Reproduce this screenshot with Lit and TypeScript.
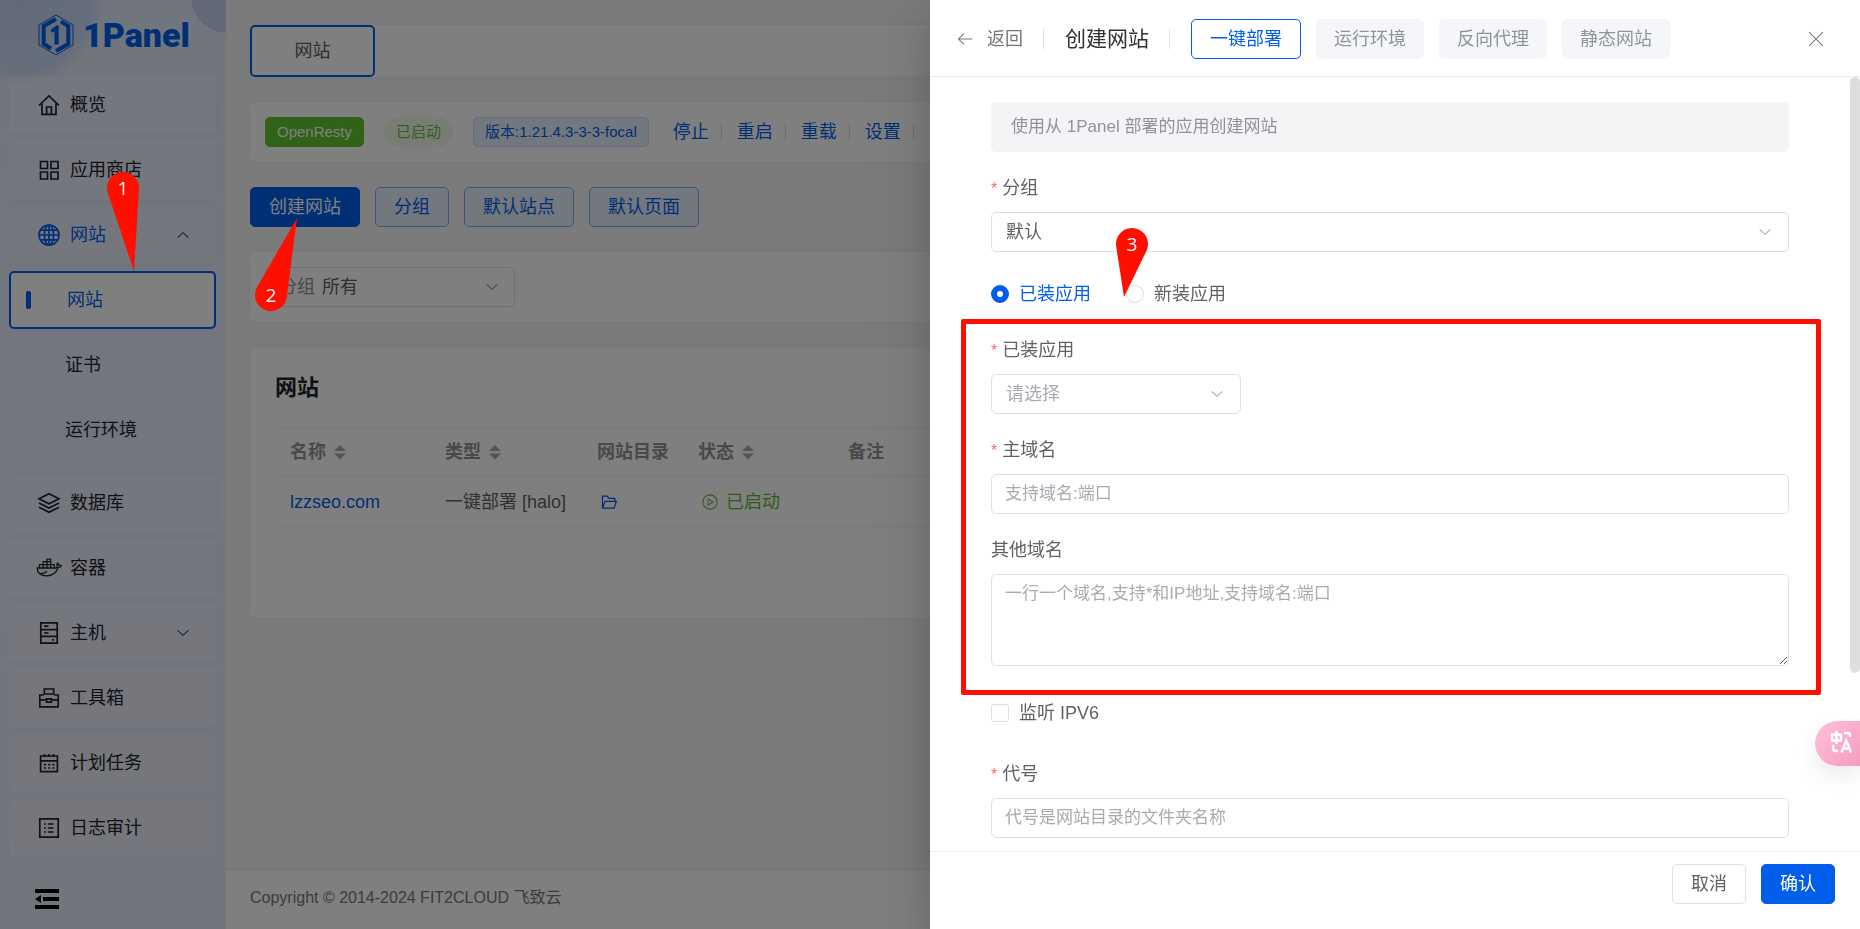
import { LitElement, html, svg, css, nothing } from "lit";
import { customElement, property } from "lit/decorators.js";
import { classMap } from "lit/directives/class-map.js";

const FONT = css`"Liberation Sans", "Noto Sans CJK SC", sans-serif`;

const icons: Record<string, unknown> = {
  home: svg`<path d="M1 11.5 11 2l10 9.5M4 9.5V20.3h14V9.5M8.6 20v-7h4.8v7"/>`,
  grid: svg`<path d="M2.5 2.5h7v7h-7zM13 2.5h7v7h-7zM2.5 13h7v7h-7zM13 13h7v7h-7z"/>`,
  globe: svg`<circle cx="11" cy="11" r="10"/><ellipse cx="11" cy="11" rx="4.6" ry="10"/><path d="M1 11h20M11 1v20M2.8 6.2h16.4M2.8 15.8h16.4"/>`,
  layers: svg`<path d="M11 1.8 1 6.8l10 5 10-5zM1 11l10 5 10-5M1 15.2l10 5 10-5"/>`,
  docker: svg`<path stroke-width="1.3" d="M-.8 11h18.6c1.3 0 1.7-1 1.3-2.4-.4-1-.3-1.8.4-2.6.9.8 1.2 1.5 1.3 2.3 1-.2 1.9 0 2.6.3-.5 1.3-1.5 2-3.3 2.2-1.8 5-5.4 8-11.4 8-5.8 0-9.5-2.8-9.5-7.8zM1.4 11V7.6h3.8V11M5.2 11V4.6H9V11M9 11V4.6h3.6V11M9 4.6V2.2h3.6v2.4M12.6 7.6h3.6V11M5.2 7.6h7.4M1.5 16.5c3 .3 5.500-.5 7.500-2.3"/>`,
  host: svg`<path d="M2.8 .8h16.4v20.400H2.8zM2.8 7.6h16.4M2.8 14.3h16.4M6 4.2h4.5M6 11h4.5M14 17.8h2"/>`,
  toolbox: svg`<path d="M6 8H1.8v11.8h18.400V8H16M6.3 7V2h9.400v5zM2 12.8h6.4M13.6 12.8H20M8.6 11.8h4.800v3.400H8.600z"/>`,
  calendar: svg`<path d="M2.6 4h16.8v15.600H2.600zM2.600 8.800h16.800M6.500 2v3M11 2v3M15.500 2v3"/><path stroke-dasharray="2.200 2" d="M5.900 12.700h11M5.900 16h11"/>`,
  log: svg`<path d="M1.8 1.8h18.4v18.4H1.8zM6 7h1.8M9.8 7H15.500M6 11h1.800M9.800 11H15.500M6 15h1.800M9.800 15H15.500"/>`,
  chevron: svg`<path d="m4.5 7.8 6.5 6 6.5-6"/>`,
  back: svg`<path d="M21 11H2M9.5 3.5 2 11l7.5 7.5"/>`,
  close: svg`<path d="m1.5 1.5 19 19M20.5 1.5l-19 19"/>`,
  folder: svg`<path d="M2 19.5V3h6.5l2.500 3h8v3.500M2 19.500 5.500 10H21l-3 9.500z"/>`,
  play: svg`<circle cx="11" cy="11" r="9.800"/><path d="M8.500 6.800v8.400L15 11z"/>`,
};

const icon = (name: string, cls = "") =>
  html`<svg class="icon ${cls}" viewBox="0 0 22 22" aria-hidden="true">${icons[name]}</svg>`;

const iconStyles = css`
  .icon {
    width: 22px;
    height: 22px;
    flex: none;
    fill: none;
    stroke: currentColor;
    stroke-width: 1.7;
    overflow: visible;
  }
  .icon.small {
    width: 16px;
    height: 16px;
  }
  .icon.chev {
    width: 18px;
    height: 18px;
    stroke-width: 1.3;
  }
  .icon.thin {
    stroke-width: 1.4;
  }
`;

/** Numbered teardrop whose point ends on the control it explains. */
@customElement("step-pin")
class StepPin extends LitElement {
  @property({ type: Number }) step = 1;
  @property({ type: Number }) dx = 0;
  @property({ type: Number }) dy = 50;

  static styles = css`
    :host {
      display: block;
      position: absolute;
      width: 0;
      height: 0;
      pointer-events: none;
    }
    svg {
      overflow: visible;
      display: block;
      width: 1px;
      height: 1px;
    }
    path {
      fill: #ff0f00;
    }
    text {
      fill: #fff;
      font: 19px "Open Sans", "Noto Sans", sans-serif;
      text-anchor: middle;
    }
  `;

  render() {
    const r = 16;
    const d = Math.hypot(this.dx, this.dy);
    const a = Math.atan2(this.dy, this.dx);
    const t = Math.acos(r / d);
    const p = (k: number) => `${r * Math.cos(k)} ${r * Math.sin(k)}`;
    return html`<svg>
      <path d="M${this.dx} ${this.dy}L${p(a + t)}A${r} ${r} 0 1 1 ${p(a - t)}Z" />
      <text x="0" y="7">${this.step}</text>
    </svg>`;
  }
}

@customElement("side-menu")
class SideMenu extends LitElement {
  static styles = [
    iconStyles,
    css`
      :host {
        display: flex;
        flex-direction: column;
        width: 226px;
        flex: none;
        font: 18px/28px ${FONT};
        color: #1f2329;
        background:
          radial-gradient(circle at 226px -2px, #c3d0ee 0 34px, transparent 35px),
          radial-gradient(circle at 20px 0, #c4d4f2 0, #ccdaf6 70px, transparent 86px),
          linear-gradient(#e2ebfa, #e7ecfc 50%, #e6eafa);
      }
      .logo {
        display: flex;
        align-items: center;
        gap: 9px;
        height: 70px;
        padding: 0 0 0 38px;
        margin-bottom: 6px;
        color: #005eeb;
        font: 900 34px/70px Roboto, sans-serif;
        text-decoration: none;
      }
      .logo svg {
        width: 36px;
        height: 42px;
      }
      nav {
        flex: 1;
        display: flex;
        flex-direction: column;
        gap: 7px;
        padding: 0 10px 0 9px;
      }
      .item {
        box-sizing: border-box;
        display: flex;
        align-items: center;
        height: 58px;
        padding: 0 20px 0 29px;
        gap: 10px;
        border-radius: 5px;
        background: rgba(255, 255, 255, 0.2);
        box-shadow: 0 0 6px rgba(80, 100, 160, 0.05);
        color: inherit;
        text-decoration: none;
      }
      .item.open {
        color: #005eeb;
      }
      .item .chev {
        margin-left: auto;
        color: #3f4552;
        margin-right: 4px;
      }
      .flip {
        transform: rotate(180deg);
      }
      .sub {
        padding-left: 56px;
        background: none;
        box-shadow: none;
      }
      .sub.last {
        margin-bottom: 8px;
      }
      .sub.active {
        padding-left: 15px;
        gap: 36px;
        background: #fff;
        border: 2px solid #005eeb;
        color: #005eeb;
      }
      .sub.active::before {
        content: "";
        width: 5px;
        height: 18px;
        border-radius: 2px;
        background: #005eeb;
      }
      .fold {
        display: flex;
        align-items: center;
        height: 61px;
        padding: 0 35px;
        border: 0;
        background: none;
      }
      .fold svg {
        width: 24px;
        height: 22px;
      }
    `,
  ];

  private item(name: string, label: string, chev = "") {
    return html`<a href="#" class=${classMap({ item: true, open: chev === "up" })}>
      ${icon(name)}<span>${label}</span>
      ${chev ? icon("chevron", chev === "up" ? "chev flip" : "chev") : nothing}
    </a>`;
  }

  render() {
    return html`
      <a class="logo" href="#">
        <svg viewBox="0 0 36 42" fill="none" stroke="#005eeb">
          <path stroke-width="1" d="M18 1 35 11v20L18 41 1 31V11z" />
          <path stroke-width="4" d="M23 7.5 30.3 12v18L18 37M13 34.5 5.7 30V12L18 5" />
          <path fill="#005eeb" stroke="none" d="M13 15.5 18.5 11.5H20.7V30.5H16.5V17.5L13 18.5z" />
        </svg>
        <span>1Panel</span>
      </a>
      <nav>
        ${this.item("home", "概览")} ${this.item("grid", "应用商店")} ${this.item("globe", "网站", "up")}
        <a href="#" class="item sub active">网站</a>
        <a href="#" class="item sub">证书</a>
        <a href="#" class="item sub last">运行环境</a>
        ${this.item("layers", "数据库")} ${this.item("docker", "容器")} ${this.item("host", "主机", "down")}
        ${this.item("toolbox", "工具箱")} ${this.item("calendar", "计划任务")} ${this.item("log", "日志审计")}
      </nav>
      <button class="fold" aria-label="收起菜单">
        <svg viewBox="0 0 24 22"><path d="M0 1h24v4H0zM8 9h16v4H8zM0 17h24v4H0zM6 7v8L0 11z" /></svg>
      </button>
    `;
  }
}

@customElement("site-list")
class SiteList extends LitElement {
  static styles = [
    iconStyles,
    css`
      :host {
        flex: 1;
        min-width: 0;
        display: flex;
        flex-direction: column;
        font: 18px/28px ${FONT};
        color: #606266;
        background: #f6f6f6;
      }
      main {
        flex: 1;
        display: flex;
        flex-direction: column;
        gap: 25px;
        padding: 25px 25px 0 24px;
      }
      .card {
        box-sizing: border-box;
        border-radius: 5px;
        background: #fff;
        box-shadow: 0 0 5px rgba(0, 0, 0, 0.05);
      }
      .tab {
        box-sizing: border-box;
        display: block;
        width: 125px;
        height: 52px;
        border: 2px solid #005eeb;
        border-radius: 5px;
        background: #fff;
        color: #5a5e66;
        font: inherit;
      }
      .status {
        display: flex;
        align-items: center;
        height: 60px;
        padding: 0 15px;
      }
      .tag {
        box-sizing: border-box;
        height: 30px;
        padding: 0 11px;
        border: 1px solid #c8dcfb;
        border-radius: 5px;
        margin-right: 20px;
        background: #e6effd;
        color: #005eeb;
        font-size: 15px;
        line-height: 28px;
        white-space: nowrap;
      }
      .tag.solid {
        background: #60c530;
        border-color: #60c530;
        color: #fff;
      }
      .tag.pill {
        background: #f0f9eb;
        border-color: #edf6e8;
        border-radius: 15px;
        color: #67c23a;
      }
      .ops {
        display: flex;
        align-items: center;
        padding-left: 4px;
      }
      .ops a {
        display: flex;
        align-items: center;
        white-space: nowrap;
        color: #005eeb;
        text-decoration: none;
      }
      .ops a::after {
        content: "";
        width: 1px;
        height: 18px;
        margin: 0 15px 0 12px;
        background: #dcdfe6;
      }
      .buttons {
        display: flex;
        gap: 15px;
      }
      .buttons button {
        height: 40px;
        padding: 0 18px;
        border: 1px solid #7fa9ee;
        border-radius: 5px;
        background: #e6effd;
        color: #005eeb;
        font: inherit;
      }
      .buttons button.primary {
        background: #005eeb;
        border-color: #005eeb;
        color: #fff;
      }
      .filter {
        padding: 15px;
      }
      .select {
        box-sizing: border-box;
        display: flex;
        align-items: center;
        width: 250px;
        height: 40px;
        padding: 0 13px;
        border: 1px solid #dcdfe6;
        border-radius: 5px;
        color: #909399;
      }
      .select select {
        flex: 1;
        appearance: none;
        margin: 0 0 0 7px;
        padding: 0;
        border: 0;
        background: none;
        font: inherit;
        color: #606266;
      }
      .sites {
        height: 271px;
        padding: 26px 25px;
      }
      h2 {
        margin: 0 0 24px;
        font-size: 22px;
        line-height: 30px;
        color: #1f2329;
      }
      table {
        width: 100%;
        table-layout: fixed;
        border-collapse: collapse;
        border-top: 1px solid #ebeef5;
      }
      th,
      td {
        box-sizing: border-box;
        height: 49px;
        padding: 0 15px;
        border-bottom: 1px solid #ebeef5;
        text-align: left;
        white-space: nowrap;
      }
      th {
        color: #909399;
      }
      td {
        height: 50px;
      }
      .c1 {
        width: 155px;
      }
      .c2 {
        width: 152px;
      }
      .c3 {
        width: 101px;
      }
      .c4 {
        width: 150px;
      }
      td a {
        color: #005eeb;
        text-decoration: none;
      }
      .cell {
        display: flex;
        align-items: center;
        gap: 8px;
      }
      .sort {
        width: 12px;
        height: 16px;
        fill: #a8abb2;
      }
      .cell.ok {
        padding-left: 4px;
        color: #60b82e;
      }
      .cell.dir {
        padding-left: 4px;
      }
      footer {
        box-sizing: border-box;
        height: 60px;
        padding-left: 24px;
        border-top: 1px solid #e4e7ed;
        background: #fff;
        font-size: 16px;
        line-height: 56px;
        color: #75787d;
      }
    `,
  ];

  private head(label: string, sortable = true) {
    return html`<span class="cell">${label}
      ${sortable
        ? html`<svg class="sort" viewBox="0 0 12 16"><path d="M0 7 6 1l6 6zM0 9.5h12l-6 6z" /></svg>`
        : nothing}</span>`;
  }

  render() {
    return html`
      <main>
        <div class="card"><button class="tab">网站</button></div>
        <div class="card status">
          <span class="tag solid">OpenResty</span><span class="tag pill">已启动</span>
          <span class="tag">版本:1.21.4.3-3-3-focal</span>
          <div class="ops">${["停止", "重启", "重载", "设置"].map((t) => html`<a href="#">${t}</a>`)}</div>
        </div>
        <div class="buttons">
          <button class="primary">创建网站</button>
          ${["分组", "默认站点", "默认页面"].map((t) => html`<button>${t}</button>`)}
        </div>
        <div class="card filter">
          <label class="select">分组<select><option>所有</option></select>${icon("chevron", "chev")}</label>
        </div>
        <div class="card sites">
          <h2>网站</h2>
          <table>
            <thead>
              <tr>
                <th class="c1">${this.head("名称")}</th>
                <th class="c2">${this.head("类型")}</th>
                <th class="c3">${this.head("网站目录", false)}</th>
                <th class="c4">${this.head("状态")}</th>
                <th>备注</th>
              </tr>
            </thead>
            <tbody>
              <tr>
                <td><a href="#">lzzseo.com</a></td>
                <td>一键部署 [halo]</td>
                <td><a class="cell dir" href="#" aria-label="网站目录">${icon("folder", "small")}</a></td>
                <td><span class="cell ok">${icon("play", "small thin")}已启动</span></td>
                <td></td>
              </tr>
            </tbody>
          </table>
        </div>
      </main>
      <footer>Copyright © 2014-2024 FIT2CLOUD 飞致云</footer>
    `;
  }
}

@customElement("create-drawer")
class CreateDrawer extends LitElement {
  static styles = [
    iconStyles,
    css`
      :host {
        position: fixed;
        inset: 0 0 0 auto;
        width: 50%;
        display: flex;
        flex-direction: column;
        background: #fff;
        font: 18px/28px ${FONT};
        color: #606266;
        box-shadow:
          0 20px 60px 20px rgba(0, 0, 0, 0.08),
          0 15px 40px rgba(0, 0, 0, 0.12),
          0 10px 20px -10px rgba(0, 0, 0, 0.16);
      }
      button {
        font: inherit;
        white-space: nowrap;
      }
      header {
        box-sizing: border-box;
        flex: none;
        display: flex;
        align-items: center;
        height: 77px;
        padding: 2px 36px 0 27px;
        border-bottom: 1px solid #e9edf2;
      }
      .back {
        display: flex;
        align-items: center;
        gap: 14px;
        padding: 0;
        border: 0;
        background: none;
        color: #73767a;
      }
      .rule {
        width: 1px;
        height: 20px;
        margin: 0 21px 0 20px;
        background: #dcdfe6;
      }
      h1 {
        margin: 0;
        font-size: 21px;
        font-weight: 400;
        color: #303133;
        white-space: nowrap;
      }
      .modes {
        flex: 1;
        display: flex;
        gap: 15px;
      }
      .modes button {
        height: 40px;
        padding: 0 18px;
        border: 0;
        border-radius: 5px;
        background: #f5f6fa;
        color: #909399;
      }
      .modes button.on {
        border: 1px solid #005eeb;
        background: #fff;
        color: #005eeb;
      }
      .close {
        display: flex;
        padding: 0;
        border: 0;
        background: none;
        color: #73767a;
      }
      .body {
        position: relative;
        flex: 1;
        min-height: 0;
        overflow: hidden;
        padding: 25px 71px 0 61px;
      }
      .alert {
        margin: 0 0 22px;
        padding: 0 20px;
        border-radius: 5px;
        background: #f4f3f6;
        color: #909399;
        font-size: 17px;
        line-height: 50px;
      }
      .field {
        margin-bottom: 22px;
      }
      .field > label {
        display: block;
        margin-bottom: 10px;
      }
      .field.need > label::before {
        content: "*";
        margin-right: 5px;
        color: #f56c6c;
        font-size: 16px;
        line-height: 1;
      }
      .box {
        box-sizing: border-box;
        display: block;
        width: 100%;
        height: 40px;
        padding: 0 13px;
        border: 1px solid #dcdfe6;
        border-radius: 5px;
        background: #fff;
        color: #606266;
        font: 17px/28px ${FONT};
        appearance: none;
        outline: 0;
      }
      .box::placeholder {
        color: #a8abb2;
      }
      select.box {
        padding: 0 14px;
        font-size: 18px;
      }
      textarea.box {
        height: 92px;
        padding: 5px 13px;
        resize: vertical;
      }
      .pick {
        display: grid;
        align-items: center;
      }
      .pick > * {
        grid-area: 1 / 1;
      }
      .pick .chev {
        justify-self: end;
        margin-right: 15px;
        color: #a8abb2;
        pointer-events: none;
      }
      .pick.short {
        width: 250px;
      }
      .empty.box {
        color: #a8abb2;
      }
      .radios {
        display: flex;
        align-items: center;
        gap: 35px;
        height: 40px;
        margin-bottom: 22px;
        position: relative;
      }
      .choice {
        display: flex;
        align-items: center;
        gap: 10px;
      }
      .choice.on {
        color: #005eeb;
      }
      .choice input {
        appearance: none;
        box-sizing: border-box;
        width: 18px;
        height: 18px;
        margin: 0;
        border: 1px solid #dcdfe6;
        border-radius: 3px;
        background: #fff;
      }
      .choice input[type="radio"] {
        border-radius: 50%;
      }
      .choice input:checked {
        border: 6px solid #005eeb;
      }
      .check {
        height: 50px;
        margin-bottom: 22px;
      }
      .marked {
        position: relative;
      }
      .frame {
        position: absolute;
        inset: -17px -32px -29px -30px;
        border: 5px solid #ff0f00;
        border-radius: 2px;
        pointer-events: none;
      }
      .pin {
        left: 141px;
        top: -30px;
      }
      .thumb {
        position: absolute;
        top: 0;
        right: 0;
        width: 10px;
        height: 77%;
        border-radius: 5px;
        background: #dddee0;
      }
      footer {
        box-sizing: border-box;
        flex: none;
        display: flex;
        justify-content: flex-end;
        gap: 15px;
        height: 78px;
        padding: 12px 25px;
        border-top: 1px solid #eef0f4;
      }
      footer button {
        height: 40px;
        padding: 0 18px;
        border: 1px solid #dcdfe6;
        border-radius: 5px;
        background: #fff;
        color: #606266;
      }
      footer button.primary {
        border-color: #005eeb;
        background: #005eeb;
        color: #fff;
      }
      .translate {
        position: absolute;
        right: 0;
        bottom: 163px;
        display: flex;
        align-items: center;
        width: 45px;
        height: 45px;
        padding: 0 0 4px 14px;
        border: 0;
        border-radius: 23px 0 0 23px;
        background: linear-gradient(135deg, #ffc1da, #f59cc0);
        box-shadow: 0 10px 20px rgba(60, 70, 90, 0.1);
      }
      .translate svg {
        width: 24px;
        height: 24px;
        fill: none;
        stroke: #fff;
        stroke-width: 2.4;
      }
    `,
  ];

  render() {
    return html`
      <header>
        <button class="back">${icon("back", "small thin")}返回</button>
        <span class="rule"></span>
        <h1>创建网站</h1>
        <span class="rule"></span>
        <div class="modes">
          <button class="on">一键部署</button>
          ${["运行环境", "反向代理", "静态网站"].map((t) => html`<button>${t}</button>`)}
        </div>
        <button class="close" aria-label="关闭">${icon("close", "small thin")}</button>
      </header>
      <div class="body">
        <p class="alert">使用从 1Panel 部署的应用创建网站</p>
        <div class="field need">
          <label for="group">分组</label>
          <div class="pick"><select id="group" class="box"><option>默认</option></select>${icon("chevron", "chev")}</div>
        </div>
        <div class="radios">
          <label class="choice on"><input type="radio" name="src" checked />已装应用</label>
          <label class="choice"><input type="radio" name="src" />新装应用</label>
          <step-pin class="pin" step="3" dx="-8" dy="53"></step-pin>
        </div>
        <div class="marked">
          <div class="field need">
            <label for="app">已装应用</label>
            <div class="pick short">
              <select id="app" class="box empty"><option>请选择</option></select>${icon("chevron", "chev")}
            </div>
          </div>
          <div class="field need">
            <label for="domain">主域名</label>
            <input id="domain" class="box" placeholder="支持域名:端口" />
          </div>
          <div class="field">
            <label for="others">其他域名</label>
            <textarea id="others" class="box" placeholder="一行一个域名,支持*和IP地址,支持域名:端口"></textarea>
          </div>
          <div class="frame"></div>
        </div>
        <label class="choice check"><input type="checkbox" />监听 IPV6</label>
        <div class="field need">
          <label for="alias">代号</label>
          <input id="alias" class="box" placeholder="代号是网站目录的文件夹名称" />
        </div>
        <div class="thumb"></div>
      </div>
      <footer>
        <button>取消</button>
        <button class="primary">确认</button>
      </footer>
      <button class="translate" aria-label="翻译">
        <svg viewBox="0 0 24 24">
          <path d="M3 4.5h9v6H3zM7.5 1v13M15 3h4q2 0 2 2v2M4 15v3q0 3 3 3h2" />
          <path d="m12.5 22.5 4.8-12 4.7 12M14.2 18.5h6.2" />
        </svg>
      </button>
    `;
  }
}

@customElement("app-root")
class AppRoot extends LitElement {
  static styles = css`
    :host {
      position: relative;
      display: flex;
      min-height: 100vh;
    }
    .mask {
      position: fixed;
      inset: 0;
      background: rgba(0, 0, 0, 0.5);
    }
    .one {
      left: 123px;
      top: 188px;
    }
    .two {
      left: 271px;
      top: 295px;
    }
  `;

  render() {
    return html`
      <side-menu></side-menu>
      <site-list></site-list>
      <div class="mask"></div>
      <create-drawer></create-drawer>
      <step-pin class="one" step="1" dx="11" dy="83"></step-pin>
      <step-pin class="two" step="2" dx="26" dy="-77"></step-pin>
    `;
  }
}
